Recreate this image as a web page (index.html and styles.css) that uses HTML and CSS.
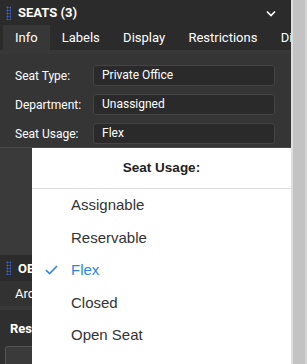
FILE: index.html
```html
<!DOCTYPE html>
<html>
<head>
<meta charset="utf-8">
<link rel="stylesheet" href="styles.css">
</head>
<body>
<div class="screen">
  <div class="panel">
    <section class="section">
      <div class="sec-header">
        <span class="grip"></span>
        <span class="sec-title">SEATS (3)</span>
        <svg class="chevron" width="10" height="7" viewBox="0 0 10 7"><path d="M1 1.5 L5 5.5 L9 1.5" fill="none" stroke="#fff" stroke-width="1.6"/></svg>
      </div>
      <div class="tabs">
        <span class="tab active">Info</span>
        <span class="tab">Labels</span>
        <span class="tab">Display</span>
        <span class="tab">Restrictions</span>
        <span class="tab">Dis</span>
      </div>
      <div class="stripe"></div>
      <div class="form">
        <div class="row"><span class="label">Seat Type:</span><span class="field">Private Office</span></div>
        <div class="row"><span class="label">Department:</span><span class="field">Unassigned</span></div>
        <div class="row"><span class="label">Seat Usage:</span><span class="field">Flex</span></div>
      </div>
      <div class="form-rest"></div>
    </section>
    <section class="section">
      <div class="sec-header second">
        <span class="grip"></span>
        <span class="sec-title">OB</span>
      </div>
      <div class="tabs second-tabs">
        <span class="tab">Arc</span>
      </div>
      <div class="stripe"></div>
      <div class="res">
        <div class="res-title">Res</div>
        <div class="res-box"></div>
      </div>
    </section>
  </div>
  <div class="scrollbar"></div>

  <div class="menu">
    <div class="menu-title">Seat Usage:</div>
    <ul class="menu-list">
      <li class="item">Assignable</li>
      <li class="item">Reservable</li>
      <li class="item selected"><svg class="check" width="13" height="10" viewBox="0 0 13 10"><path d="M1 5.2 L4.6 8.6 L12 1" fill="none" stroke="#2b87e3" stroke-width="1.6"/></svg>Flex</li>
      <li class="item">Closed</li>
      <li class="item">Open Seat</li>
    </ul>
  </div>
</div>
</body>
</html>
```
FILE: styles.css
```css
* { box-sizing: border-box; }
html, body { margin: 0; padding: 0; }
body {
  width: 307px;
  height: 364px;
  overflow: hidden;
  background: #c3c3c3;
  font-family: Roboto, "Liberation Sans", sans-serif;
}
.screen {
  position: relative;
  display: flex;
  width: 307px;
  height: 364px;
}
.panel {
  width: 291px;
  height: 364px;
  background: #2d2d2d;
  display: flex;
  flex-direction: column;
  overflow: hidden;
}
.scrollbar {
  width: 16px;
  height: 364px;
  background: #c3c3c3;
  border-left: 2px solid #dedede;
  border-right: 2px solid #d4d4d4;
}
.sec-header {
  height: 25px;
  display: flex;
  align-items: center;
  padding-left: 6px;
  background: #2b2b2b;
  color: #fff;
}
.grip {
  width: 5px;
  height: 14px;
  margin-right: 7px;
  background-image: radial-gradient(circle, #3d63d6 0.9px, transparent 1.1px);
  background-size: 3px 3px;
  background-position: 0 0;
}
.sec-title {
  font-weight: bold;
  font-size: 13px;
  flex: 1;
}
.chevron { margin-right: 15px; margin-top: 1px; }
.tabs {
  height: 25px;
  display: flex;
  padding-left: 3px;
  background: #2b2b2b;
  white-space: nowrap;
  overflow: hidden;
}
.tab {
  color: #fff;
  font-size: 13px;
  padding: 0 11.3px 0 12px;
  line-height: 25px;
}
.tab.active { background: #373737; padding-right: 12px; }
.stripe { height: 4px; background: #383838; }
.form {
  background: #353535;
  padding: 11px 16px 3px 15px;
  display: flex;
  flex-direction: column;
  gap: 8px;
}
.row {
  display: flex;
  align-items: center;
  height: 21px;
}
.label {
  width: 78px;
  color: #fff;
  font-size: 12px;
}
.field {
  flex: 1;
  height: 21px;
  line-height: 19px;
  background: #2a2a2a;
  border: 1px solid #444;
  border-radius: 3px;
  color: #fff;
  font-size: 12px;
  padding-left: 8px;
}
.form-rest {
  height: 108px;
  background: #3a3a3a;
  border-top: 1px solid #4a4a4a;
}
.sec-header.second { height: 26px; }
.second-tabs { background: #323232; height: 25px; }
.second-tabs .tab { line-height: 25px; }
.res {
  background: #2f2f2f;
  padding: 11px 0 0 10px;
  flex: 1;
}
.res-title {
  color: #fff;
  font-weight: bold;
  font-size: 13px;
  height: 25px;
}
.res-box {
  margin-left: -5px;
  height: 30px;
  background: #3a3a3a;
  border: 1px solid #555;
  border-radius: 3px;
}
.menu {
  position: absolute;
  left: 32px;
  top: 148px;
  width: 259px;
  height: 230px;
  background: #fff;
  font-family: "Liberation Sans", Arial, sans-serif;
}
.menu-title {
  height: 41px;
  line-height: 40px;
  text-align: center;
  font-weight: bold;
  font-size: 13.5px;
  color: #222;
  border-bottom: 1px solid #dcdcdc;
}
.menu-list {
  list-style: none;
  margin: 0;
  padding: 0;
}
.item {
  position: relative;
  height: 32.6px;
  line-height: 32px;
  padding-left: 39px;
  font-size: 15px;
  color: #333;
}
.item.selected { color: #2b87e3; }
.check {
  position: absolute;
  left: 13px;
  top: 11px;
}
```
